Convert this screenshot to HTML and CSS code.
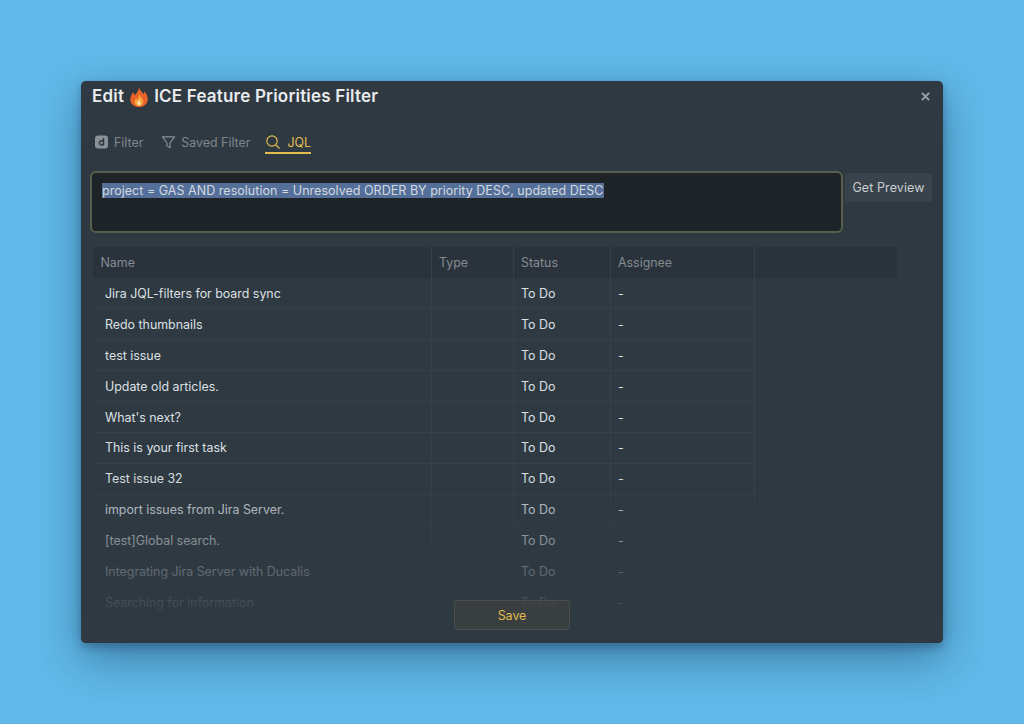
FILE: index.html
```html
<!DOCTYPE html>
<html lang="en">
<head>
	<meta charset="UTF-8">
	<title>Edit ICE Feature Priorities Filter</title>
	<link rel="stylesheet" href="styles.css">
</head>
<body>
	<div class="modal">
		<div class="head">
			<h1 class="title">Edit
				<svg class="fire" viewBox="0 0 20 24" width="18" height="21">
					<path fill="#e8622a" d="M10 1c1 4 3 5 5 8 1-1 1-2 1-3 3 3 4 6 4 9 0 5-4 9-10 9S0 20 0 15c0-3 2-5 3-8 1 1 2 2 2 4 2-3 5-6 5-10z"/>
					<path fill="#f7a33c" d="M10 9c1 3 5 5 5 9 0 3-2 5-5 5s-5-2-5-5c0-2 1-3 2-4 0 1 1 2 1 2 1-2 2-4 2-7z"/>
					<path fill="#fde2a0" d="M10 16c1 1 2 2 2 4 0 1-1 2-2 2s-2-1-2-2c0-2 1-3 2-4z"/>
				</svg>
				ICE Feature Priorities Filter</h1>
			<span class="close">
				<svg viewBox="0 0 10 10" width="9" height="9"><path d="M1 1l8 8M9 1l-8 8" stroke="#9aa2a8" stroke-width="2.200"/></svg>
			</span>
		</div>
		<div class="tabs">
			<div class="tab">
				<svg viewBox="0 0 14 14" width="14" height="14"><rect width="13" height="13" y="0.5" rx="3" fill="#8b9297"/><path d="M8.5 3v7.5M8.5 7.2a2.1 2.1 0 1 0 0 1.2" fill="none" stroke="#2f3942" stroke-width="1.5"/></svg>
				Filter
			</div>
			<div class="tab">
				<svg viewBox="0 0 16 16" width="15" height="15"><path d="M1.5 2h13L9.7 8.3v5.2l-3.4-2V8.300z" fill="none" stroke="#8b9297" stroke-width="1.2" stroke-linejoin="round"/></svg>
				Saved Filter
			</div>
			<div class="tab on">
				<svg viewBox="0 0 16 16" width="16" height="16"><circle cx="7" cy="7" r="5.2" fill="none" stroke="#e3bc4e" stroke-width="1.2"/><path d="M11 11l3.500 3.500" stroke="#e3bc4e" stroke-width="1.2"/></svg>
				JQL
			</div>
		</div>
		<div class="query">
			<div class="input"><span class="sel">project = GAS AND resolution = Unresolved ORDER BY priority DESC, updated DESC</span></div>
			<button class="preview">Get Preview</button>
		</div>
		<div class="list">
			<table>
				<thead>
					<tr><th class="c1">Name</th><th class="c2">Type</th><th class="c3">Status</th><th class="c4">Assignee</th><th></th></tr>
				</thead>
				<tbody>
					<tr><td class="name">Jira JQL-filters for board sync</td><td></td><td>To Do</td><td>-</td></tr>
					<tr><td class="name">Redo thumbnails</td><td></td><td>To Do</td><td>-</td></tr>
					<tr><td class="name">test issue</td><td></td><td>To Do</td><td>-</td></tr>
					<tr><td class="name">Update old articles.</td><td></td><td>To Do</td><td>-</td></tr>
					<tr><td class="name">What's next?</td><td></td><td>To Do</td><td>-</td></tr>
					<tr><td class="name">This is your first task</td><td></td><td>To Do</td><td>-</td></tr>
					<tr><td class="name">Test issue 32</td><td></td><td>To Do</td><td>-</td></tr>
					<tr><td class="name">import issues from Jira Server.</td><td></td><td>To Do</td><td>-</td></tr>
					<tr><td class="name">[test]Global search.</td><td></td><td>To Do</td><td>-</td></tr>
					<tr><td class="name">Integrating Jira Server with Ducalis</td><td></td><td>To Do</td><td>-</td></tr>
					<tr><td class="name">Searching for information</td><td></td><td>To Do</td><td>-</td></tr>
				</tbody>
			</table>
		</div>
		<div class="fade"></div>
		<button class="save">Save</button>
	</div>
</body>
</html>
```

FILE: styles.css
```css
*{
	margin: 0;
	padding: 0;
	box-sizing: border-box;
}
body{
	background-color: #60b9e9;
	font-family: Inter, "Liberation Sans", sans-serif;
	padding: 81px 0 0 81px;
	height: 724px;
	overflow: hidden;
}
.modal{
	position: relative;
	width: 862px;
	height: 562px;
	background-color: #2f3942;
	border-radius: 5px;
	box-shadow: 0 4px 10px rgba(20,50,80,.35), 0 16px 44px rgba(20,50,80,.45);
	display: flex;
	flex-direction: column;
}
.head{
	display: flex;
	justify-content: space-between;
	align-items: center;
	height: 30px;
	padding: 0 13px 0 11px;
}
.title{
	font-size: 17px;
	font-weight: 600;
	color: #e9ebed;
	display: flex;
	align-items: center;
	gap: 6px;
	letter-spacing: .2px;
}
.fire{
	display: block;
}
.close{
	display: flex;
}
.tabs{
	display: flex;
	gap: 18px;
	padding: 21px 0 0 14px;
	height: 43px;
}
.tab{
	display: flex;
	align-items: center;
	gap: 5px;
	height: 22px;
	padding-bottom: 2px;
	font-size: 12.4px;
	color: #7f878d;
}
.tab.on{
	color: #e3bc4e;
	border-bottom: 2px solid #e3bc4e;
	padding-bottom: 0;
	margin-left: -3px;
	gap: 6px;
}
.query{
	display: flex;
	align-items: flex-start;
	gap: 2px;
	padding: 17px 0 0 9px;
}
.input{
	width: 753px;
	height: 62px;
	background-color: #1e2327;
	border: 2px solid #565f4c;
	border-radius: 6px;
	padding: 10px 10px;
	font-size: 12.5px;
	line-height: 15px;
	color: #d3d8de;
	letter-spacing: .03px;
}
.sel{
	background-color: #546f99;
}
.preview{
	width: 87px;
	height: 29px;
	margin-top: 2px;
	background-color: #39434c;
	border: 0;
	border-radius: 4px;
	font-family: inherit;
	font-size: 12.5px;
	color: #c9cdd0;
	letter-spacing: .1px;
}
.list{
	margin: 14px 0 0 12px;
	width: 804px;
	flex: 1;
	overflow: hidden;
}
table{
	border-collapse: collapse;
	table-layout: fixed;
	width: 804px;
	font-size: 12.4px;
}
th{
	height: 31px;
	padding-bottom: 1px;
	background-color: #2a333b;
	color: #858c92;
	font-weight: 400;
	text-align: left;
	padding-left: 7.5px;
	border-right: 1px solid #36404a;
}
th:last-child{
	border-right: 0;
}
.c1{
	width: 338px;
}
.c2{
	width: 82px;
}
.c3{
	width: 97px;
}
.c4{
	width: 144px;
}
td{
	height: 30.9px;
	color: #dde0e3;
	padding-left: 7.5px;
	border-right: 1px solid #36404a;
	border-bottom: 1px solid #36404a;
}
td.name{
	padding-left: 12px;
}
.fade{
	position: absolute;
	left: 0;
	right: 0;
	bottom: 0;
	height: 170px;
	border-radius: 0 0 5px 5px;
	background: linear-gradient(to bottom, rgba(47,57,66,0), rgba(47,57,66,.72) 58%, rgba(47,57,66,.885) 76%, #2f3942 90%);
}
.save{
	position: absolute;
	left: 373px;
	top: 519px;
	width: 116px;
	height: 30px;
	background-color: rgba(62,66,66,.75);
	border: 1px solid #4a4f4e;
	border-radius: 3px;
	font-family: inherit;
	font-size: 12.4px;
	color: #e3bc4e;
}
```
